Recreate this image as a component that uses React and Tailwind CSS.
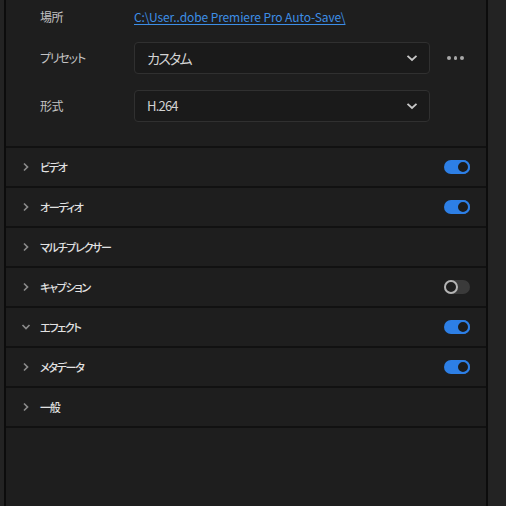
import React from "react";

const FONT = { fontFamily: '"Noto Sans CJK JP", "Noto Sans", sans-serif' };

const SECTIONS = [
  { label: "ビデオ", toggle: true, on: true },
  { label: "オーディオ", toggle: true, on: true },
  { label: "マルチプレクサー", toggle: false },
  { label: "キャプション", toggle: true, on: false },
  { label: "エフェクト", toggle: true, on: true, open: true },
  { label: "メタデータ", toggle: true, on: true },
  { label: "一般", toggle: false },
];

function Chevron({ open }) {
  return (
    <svg width="10" height="10" viewBox="0 0 10 10" className="shrink-0">
      {open ? (
        <path d="M1.5 3 L5 6.5 L8.5 3" fill="none" stroke="#8a8a8a" strokeWidth="1.7" />
      ) : (
        <path d="M3 1.5 L6.5 5 L3 8.5" fill="none" stroke="#8a8a8a" strokeWidth="1.7" />
      )}
    </svg>
  );
}

function Toggle({ on }) {
  if (on) {
    return (
      <div className="w-[26px] h-[14px] rounded-full bg-[#2d7fe6] flex items-center justify-end">
        <div className="w-[14px] h-[14px] rounded-full bg-[#1c1c1c] border-2 border-[#2d7fe6]" />
      </div>
    );
  }
  return (
    <div className="w-[26px] h-[14px] rounded-full bg-[#3a3a3a] flex items-center justify-start">
      <div className="w-[14px] h-[14px] rounded-full bg-[#1e1e1e] border-2 border-[#b4b4b4]" />
    </div>
  );
}

function Select({ value, textClass }) {
  return (
    <div className="w-[296px] h-[32px] rounded-[4px] border border-[#303030] bg-[#1a1a1a] flex items-center justify-between pl-[12px] pr-[11px]">
      <span className={"text-[#d2d2d2] " + textClass}>{value}</span>
      <svg width="12" height="8" viewBox="0 0 12 8">
        <path d="M1.5 1.8 L6 6 L10.5 1.8" fill="none" stroke="#c8c8c8" strokeWidth="1.8" />
      </svg>
    </div>
  );
}

export default function App() {
  return (
    <div
      className="w-[506px] h-[506px] bg-[#232323] flex overflow-hidden [font-feature-settings:'palt']"
      style={FONT}
    >
      <div className="w-[4px] shrink-0" />
      <div className="w-[484px] shrink-0 h-full bg-[#1e1e1e] border-x-2 border-[#0c0c0c] flex flex-col">
        {/* top settings */}
        <div className="pl-[34px] pt-[7px] pb-[24px] border-b-2 border-[#111111] flex flex-col">
          <div className="flex items-center h-[20px]">
            <div className="w-[94px] text-[12px] text-[#c4c4c4] tracking-[-0.5px]">場所</div>
            <a className="text-[12px] tracking-[-0.1px] text-[#3d8ee6] underline underline-offset-2 cursor-pointer">
              C:\User..dobe Premiere Pro Auto-Save\
            </a>
          </div>
          <div className="flex items-center mt-[15px]">
            <div className="w-[94px] text-[12px] text-[#c4c4c4] tracking-[-1.2px]">プリセット</div>
            <Select value="カスタム" textClass="text-[14px] tracking-[-1.8px]" />
            <div className="flex gap-[3px] ml-[17px]">
              <div className="w-[3.5px] h-[3.5px] rounded-full bg-[#a8a8a8]" />
              <div className="w-[3.5px] h-[3.5px] rounded-full bg-[#a8a8a8]" />
              <div className="w-[3.5px] h-[3.5px] rounded-full bg-[#a8a8a8]" />
            </div>
          </div>
          <div className="flex items-center mt-[16px]">
            <div className="w-[94px] text-[12px] text-[#c4c4c4] tracking-[-0.5px]">形式</div>
            <Select value="H.264" textClass="text-[13px] tracking-[-0.8px]" />
          </div>
        </div>

        {/* sections */}
        {SECTIONS.map((s) => (
          <div
            key={s.label}
            className="h-[40px] shrink-0 border-b-2 border-[#111111] flex items-center pl-[15px] pr-[16px]"
          >
            <Chevron open={s.open} />
            <span className="ml-[9px] text-[11px] tracking-[-1.3px] font-medium text-[#e2e2e2] grow">
              {s.label}
            </span>
            {s.toggle && <Toggle on={s.on} />}
          </div>
        ))}
        <div className="grow" />
      </div>
    </div>
  );
}
